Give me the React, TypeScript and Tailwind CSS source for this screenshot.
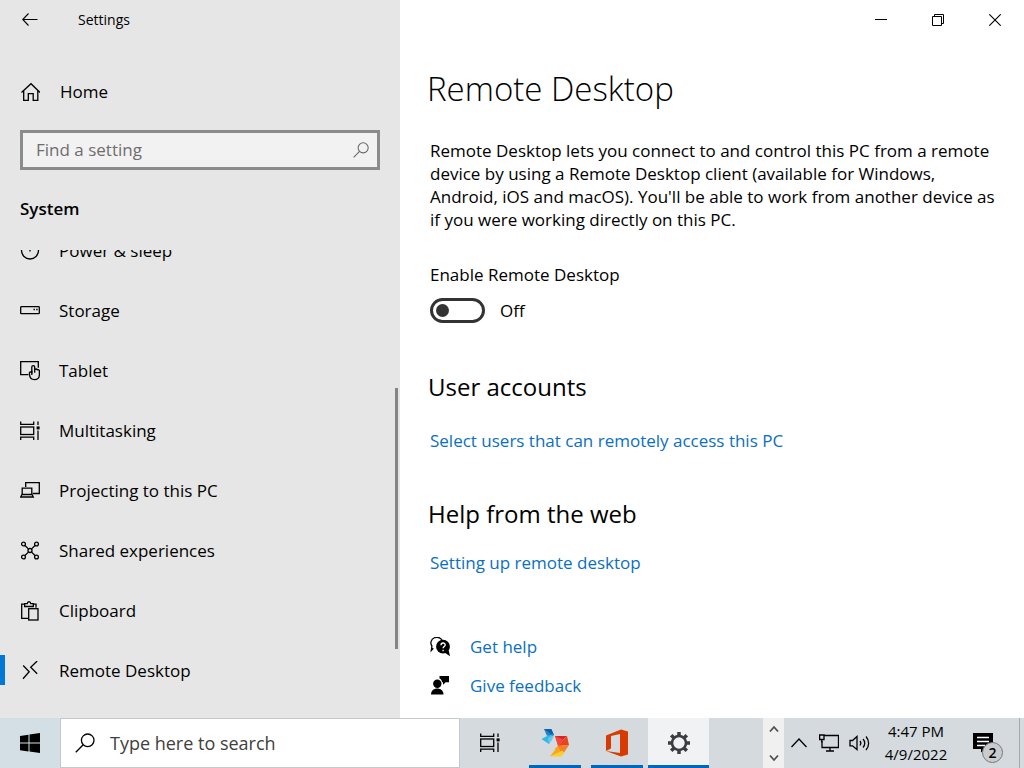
import type { ReactNode } from "react";

type IconProps = { children: ReactNode; className?: string; box?: string };

function Icon({ children, className = "size-5", box = "0 0 20 20" }: IconProps) {
  return (
    <svg
      viewBox={box}
      className={`${className} shrink-0`}
      fill="none"
      stroke="currentColor"
      strokeWidth="1.3"
      aria-hidden="true"
    >
      {children}
    </svg>
  );
}

const PowerIcon = () => (
  <Icon>
    <circle cx="10" cy="9.500" r="8.500" />
    <path d="M10 2v8.500" />
  </Icon>
);

const StorageIcon = () => (
  <Icon>
    <rect x="0.700" y="5.700" width="18.600" height="7" rx="0.800" />
    <path d="M13.500 8.500h1.400M16.200 8.500h1.400" />
  </Icon>
);

const TabletIcon = () => (
  <Icon>
    <path d="M8.500 13.700H0.700V0.700h17.600v6" />
    <path
      d="M11.800 11.500c-1.600-1-2.600-.3-2.400 1.200.2 3.500 2 5.900 5 5.900 3.200 0 5-2.200 5-5.200V10c0-1.200-1.300-1.500-2-1.200-.6-.9-2-.7-2.700-.3V6c0-1.900-2.900-1.900-2.900 0z"
      fill="#e6e6e6"
    />
    <path d="M11.800 9.500v4.500M14.700 8.500v3.300" />
  </Icon>
);

const TaskViewIcon = () => (
  <Icon>
    <path d="M0.700 0.500v2.900h13V0.500M0.700 19v-2.900h13V19" />
    <rect x="0.700" y="6" width="13" height="7.500" />
    <path d="M18 0.500v3.500M18 9.500V19" />
    <rect x="16.600" y="5.400" width="3" height="3" fill="currentColor" stroke="none" />
  </Icon>
);

const ProjectIcon = () => (
  <Icon>
    <path d="M5.700 6V1.700h13.600v10.800h-6.500" />
    <path d="M2.200 13.300V7.200h9.600v6.100" />
    <path d="M0.700 16L2 13.500h10l1.300 2.500z" />
  </Icon>
);

const SharedIcon = () => (
  <Icon>
    <circle cx="3.500" cy="3" r="1.900" />
    <circle cx="16.500" cy="3" r="1.900" />
    <circle cx="3.500" cy="16" r="1.900" />
    <circle cx="16.500" cy="16" r="1.900" />
    <circle cx="10" cy="9.500" r="2" />
    <path d="M5 4.500l3.400 3.400M15 4.500l-3.400 3.400M5 14.500l3.400-3.400M15 14.500l-3.400-3.400" />
  </Icon>
);

const ClipboardIcon = () => (
  <Icon>
    <path d="M8 17.300H1.700V3.200h3M13 3.200h3v3.500" />
    <path d="M4.700 5.500V2.700h2.500c.3-2.600 3.300-2.600 3.600 0h2.500v2.800z" />
    <rect x="8.700" y="7.700" width="9.300" height="11.300" />
  </Icon>
);

const RemoteIcon = () => (
  <Icon>
    <path d="M3.200 4.500l6 6.200-6.200 7M17.200 0L10.700 6.200l6.500 6.500" />
  </Icon>
);

const SearchIcon = ({ className }: { className: string }) => (
  <Icon className={className}>
    <circle cx="12.700" cy="7.300" r="6.300" />
    <path d="M8.200 11.800L0.800 19.200" />
  </Icon>
);

const navItems = [
  { icon: PowerIcon, text: "Power & sleep", active: false },
  { icon: StorageIcon, text: "Storage", active: false },
  { icon: TabletIcon, text: "Tablet", active: false },
  { icon: TaskViewIcon, text: "Multitasking", active: false },
  { icon: ProjectIcon, text: "Projecting to this PC", active: false },
  { icon: SharedIcon, text: "Shared experiences", active: false },
  { icon: ClipboardIcon, text: "Clipboard", active: false },
  { icon: RemoteIcon, text: "Remote Desktop", active: true },
];

function Sidebar() {
  return (
    <aside className="flex w-[400px] shrink-0 flex-col bg-[#e6e6e6]">
      <div className="flex h-10 shrink-0 items-center">
        <button className="flex h-10 w-[60px] items-center justify-center" aria-label="Back">
          <Icon className="size-4" box="0 0 16 16">
            <path d="M15.500 7.500H0.700M6.500 1.500L0.700 7.500l5.800 6" strokeWidth="1.100" />
          </Icon>
        </button>
        <span className="pl-[18px] text-sm">Settings</span>
      </div>

      <a href="#home" className="mt-8 flex h-10 shrink-0 items-center gap-5 pl-5">
        <Icon>
          <path d="M1.500 10.500L11 1.700l9 8.800M3.700 8.700V18.300h4.600v-6.600h4.900v6.600h4.600V8.700" />
        </Icon>
        Home
      </a>

      <label className="mx-5 mt-[18px] flex h-10 shrink-0 items-center border-3 border-[#8c8c8c] bg-[#f2f2f2] pr-2 pl-[13px]">
        <input
          type="text"
          aria-label="Find a setting"
          placeholder="Find a setting"
          className="min-w-0 flex-1 bg-transparent outline-none placeholder:text-[#6e6e6e]"
        />
        <SearchIcon className="size-4 text-[#666]" />
      </label>

      <h2 className="mt-[27px] shrink-0 pl-5 leading-6 font-semibold">System</h2>

      <nav className="relative mt-[29px] flex min-h-0 flex-1 flex-col justify-end overflow-hidden pb-[17px]">
        {navItems.map((item) => (
          <a
            key={item.text}
            href="#system"
            className="relative flex h-[60px] shrink-0 items-center gap-[19px] pl-5"
          >
            {item.active && <span className="absolute top-[14px] left-0 h-[30px] w-[5px] bg-[#0078d7]" />}
            <item.icon />
            {item.text}
          </a>
        ))}
        <div className="absolute top-[138px] right-[2px] h-[261px] w-[3px] bg-[#858585]" />
      </nav>
    </aside>
  );
}

function WindowControls() {
  return (
    <div className="flex h-10 shrink-0 justify-end pr-px">
      <button className="flex w-[57px] items-center justify-center" aria-label="Minimize">
        <Icon className="size-3" box="0 0 12 12">
          <path d="M0 5.500h12" strokeWidth="1" />
        </Icon>
      </button>
      <button className="flex w-[57px] items-center justify-center" aria-label="Restore">
        <Icon className="size-3" box="0 0 12 12">
          <path d="M0.500 2.500h9v9h-9zM2.500 2.500v-2h9v9h-2" strokeWidth="1" />
        </Icon>
      </button>
      <button className="flex w-[57px] items-center justify-center" aria-label="Close">
        <Icon className="size-3" box="0 0 12 12">
          <path d="M0.300 0.300l11.400 11.400M11.700 0.300L0.300 11.700" strokeWidth="1.100" />
        </Icon>
      </button>
    </div>
  );
}

function Content() {
  return (
    <main className="flex min-w-0 flex-1 flex-col bg-white">
      <WindowControls />
      <div className="min-h-0 flex-1 overflow-hidden pt-[25px] pr-5 pl-[30px]">
        <h1 className="-ml-[3px] text-[33px] leading-[48px] font-light">Remote Desktop</h1>
        <p className="mt-[26px] leading-[23px]">
          Remote Desktop lets you connect to and control this PC from a remote device by using a
          Remote Desktop client (available for Windows, Android, iOS and macOS). You'll be able to
          work from another device as if you were working directly on this PC.
        </p>

        <label htmlFor="enable" className="mt-8 block leading-6">
          Enable Remote Desktop
        </label>
        <div className="mt-[11px] flex h-[25px] items-center gap-[15px]">
          <input
            id="enable"
            type="checkbox"
            role="switch"
            className="flex h-[25px] w-[55px] appearance-none items-center rounded-full border-3 border-[#333] pl-[3px] before:size-[13px] before:rounded-full before:bg-[#333]"
          />
          <span>Off</span>
        </div>

        <h2 className="mt-12 -ml-[2px] text-2xl">User accounts</h2>
        <a href="#users" className="mt-[26px] block leading-6 text-[#0a70bf]">
          Select users that can remotely access this PC
        </a>

        <h2 className="mt-[45px] -ml-[2px] text-2xl">Help from the web</h2>
        <a href="#setup" className="mt-[21px] block leading-6 text-[#0a70bf]">
          Setting up remote desktop
        </a>

        <a href="#help" className="mt-[60px] flex items-center gap-5 leading-6">
          <Icon>
            <path d="M3.300 11.300L1.300 13.500l.6-4.500A6 5.600 0 1 1 12.700 4.500" />
            <circle cx="13" cy="9.700" r="6.900" fill="#000" stroke="none" />
            <path d="M14.500 15.500l5.500 3.800-1.300-6z" fill="#000" stroke="none" />
            <path d="M11 8.200c0-3 4.200-2.800 4.200-.3 0 1.600-2.100 1.600-2.100 3.400M13.100 12.700v1.500" stroke="#fff" />
          </Icon>
          <span className="text-[#0a70bf]">Get help</span>
        </a>
        <a href="#feedback" className="mt-[15px] flex items-center gap-5 leading-6">
          <Icon>
            <g fill="#000" stroke="none">
              <circle cx="7.300" cy="7.700" r="4.200" />
              <path d="M1 18.500c0-8 12.500-8 12.500 0z" />
              <path d="M9.500-1H19v7.300h-3.300l-2.700 2.500V6.300h-.9C11.700 4 10.900 3 9.500 2.500z" />
            </g>
          </Icon>
          <span className="text-[#0a70bf]">Give feedback</span>
        </a>
      </div>
    </main>
  );
}

function Taskbar() {
  return (
    <footer className="flex h-[50px] shrink-0 bg-[#d4dadd] text-black">
      <button className="flex w-[60px] items-center justify-center bg-[#d3dfe5]" aria-label="Start">
        <svg viewBox="0 0 20 20" className="size-5" aria-hidden="true">
          <path d="M0 3l8.500-1.300v7.900H0zM9.500 1.500L20 0v9.600H9.500zM0 10.500h8.500v7.900L0 17.200zM9.500 10.500H20V20L9.500 18.500z" />
        </svg>
      </button>

      <label className="flex w-[400px] items-center gap-[15px] border border-[#c3c8ca] bg-white pl-[14px]">
        <SearchIcon className="size-5" />
        <input
          type="text"
          aria-label="Type here to search"
          placeholder="Type here to search"
          className="min-w-0 flex-1 bg-transparent text-lg outline-none placeholder:text-[#404040]"
        />
      </label>

      <button className="mr-1 flex w-[60px] items-center justify-center" aria-label="Task View">
        <TaskViewIcon />
      </button>

      <button className="relative flex w-[62px] items-center justify-center" aria-label="Remote app">
        <svg viewBox="0 0 30 30" className="size-[30px]" aria-hidden="true">
          <path d="M4 1h7.500L14 7l-4 3z" fill="#0a5fae" />
          <path d="M4 1l3 7 4-2z" fill="#2585c9" />
          <path d="M1.500 11L7 8l6-2-4 10z" fill="#35b6e8" />
          <path d="M14 7l-2 5-3 4-1-6z" fill="#69c8ea" />
          <path d="M15 8h12l-9 9z" fill="#dc2626" />
          <path d="M15 8l3 10 6-6z" fill="#ef4b3c" />
          <path d="M27 8l2 9-11 1z" fill="#e8431f" />
          <path d="M29 17l-11 1-3 3 8 5z" fill="#f58220" />
          <path d="M18 18l-8 10.500 11-4.500z" fill="#fba51a" />
          <path d="M10 28.500l12.500-6 1.500 2-2.500 4z" fill="#fcd02c" />
        </svg>
        <span className="absolute inset-x-[5px] bottom-0 h-[3px] bg-[#0067c0]" />
      </button>
      <button className="relative flex w-[62px] items-center justify-center" aria-label="Office">
        <svg viewBox="0 0 24 28" className="h-7 w-6" aria-hidden="true">
          <path d="M1 6.500L16 0.500l7 2v23l-7 2L1 22l14 2V5L6 7v12.500L1 22z" fill="#d83b01" />
        </svg>
        <span className="absolute inset-x-[5px] bottom-0 h-[3px] bg-[#0067c0]" />
      </button>
      <button
        className="relative flex w-[61px] items-center justify-center bg-[#f0f2f4] text-[#3b3d40]"
        aria-label="Settings"
      >
        <Icon className="size-6" box="0 0 24 24">
          <circle cx="12" cy="12" r="7" strokeWidth="2.600" />
          <path
            d="M12 1v4M12 19v4M1 12h4M19 12h4M4.200 4.200l2.900 2.900M16.900 16.900l2.900 2.900M19.800 4.200l-2.900 2.900M7.100 16.900l-2.900 2.900"
            strokeWidth="3.500"
          />
        </Icon>
        <span className="absolute inset-x-0 bottom-0 h-[3px] bg-[#0067c0]" />
      </button>

      <div className="ml-auto flex">
        <div className="flex w-[21px] flex-col justify-between bg-[#f0f0f0] text-[#505050]">
          <button className="flex h-[21px] items-center justify-center" aria-label="Scroll up">
            <Icon className="size-[10px]" box="0 0 10 10">
              <path d="M1 7.500l4-4.500 4 4.500" strokeWidth="1.800" />
            </Icon>
          </button>
          <button className="flex h-[21px] items-center justify-center" aria-label="Scroll down">
            <Icon className="size-[10px]" box="0 0 10 10">
              <path d="M1 2.500L5 7l4-4.500" strokeWidth="1.800" />
            </Icon>
          </button>
        </div>
        <button className="flex w-[30px] items-center justify-center" aria-label="Show hidden icons">
          <Icon className="size-4" box="0 0 16 16">
            <path d="M0.500 12L8 4l7.500 8" />
          </Icon>
        </button>
        <button className="flex w-[30px] items-center justify-center" aria-label="Network">
          <Icon>
            <path d="M5 2.500h14.500v12H3V8M11 14.500v3.500M7 18h8" />
            <path d="M0.600 2h4.400v4.500H0.600zM2.800 6.500v3" />
          </Icon>
        </button>
        <button className="flex w-[30px] items-center justify-center" aria-label="Volume">
          <Icon box="0 0 21 20" className="h-5 w-[21px]">
            <path d="M1 7.500h2.500L8 3.500v13L3.500 12.800H1z" />
            <path d="M11 8c1 1.200 1 3 0 4.500M14 6c2.300 2.400 2.300 6.200 0 8.500M17 3.500c3.500 4 3.500 9.500 0 13.500" />
          </Icon>
        </button>
        <button className="flex w-[84px] flex-col items-center justify-center text-[15px] leading-[23px]">
          <span>4:47 PM</span>
          <span>4/9/2022</span>
        </button>
        <button className="relative mr-[11px] flex w-[50px] items-center justify-center" aria-label="2 notifications">
          <svg viewBox="0 0 20 20" className="size-5" aria-hidden="true">
            <path d="M0 0h20v16h-8l-4 3.500V16H0z" />
            <path d="M4 4.500h12M4 8.500h12M4 12.500h8" stroke="#fff" strokeWidth="1.300" />
          </svg>
          <span className="absolute right-[5px] bottom-[5px] flex size-[21px] items-center justify-center rounded-full border border-[#777] bg-[#c9cccf] text-sm font-semibold">
            2
          </span>
        </button>
        <button className="w-[5px] border-l border-[#a5a9ab]" aria-label="Show desktop" />
      </div>
    </footer>
  );
}

export default function App() {
  return (
    <div className="flex h-screen min-h-[600px] flex-col overflow-hidden font-['Open_Sans','Noto_Sans',sans-serif] text-[17px] text-black">
      <div className="flex min-h-0 flex-1">
        <Sidebar />
        <Content />
      </div>
      <Taskbar />
    </div>
  );
}
